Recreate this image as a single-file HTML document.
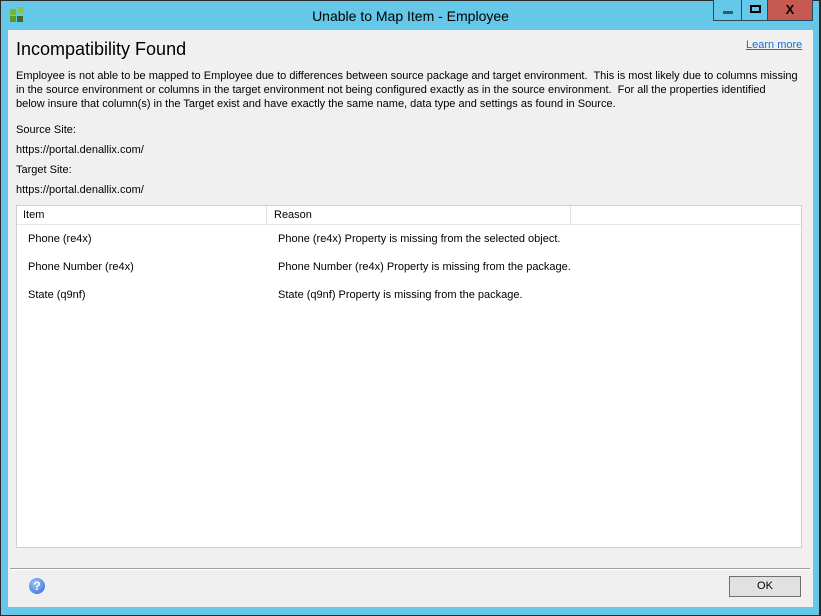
<!DOCTYPE html>
<html><head><meta charset="utf-8"><style>
*{margin:0;padding:0;box-sizing:border-box}
body{width:821px;height:616px;overflow:hidden;background:#2b2b2b;font-family:Tahoma,"Liberation Sans",sans-serif;font-size:11px;color:#000;position:relative}
.win{position:absolute;left:1px;top:1px;width:818px;height:614px;background:#65c8e8}
.client{position:absolute;left:8px;top:30px;width:805px;height:577px;background:#f0f0f0}
.a{position:absolute;white-space:nowrap}
.title{position:absolute;left:0;width:821px;top:8px;text-align:center;font-size:14px;color:#000}
.btn{position:absolute;top:0;height:21px;border:1px solid #2a4a5a;border-top:none}
</style></head><body>
<div class="win"></div>
<div class="a" style="left:10px;top:9px;width:6px;height:6px;background:#76b43a"></div>
<div class="a" style="left:18px;top:7px;width:6px;height:6px;background:#8cc63f"></div>
<div class="a" style="left:10px;top:16px;width:6px;height:6px;background:#5a9a2a"></div>
<div class="a" style="left:17px;top:16px;width:6px;height:6px;background:#3f6e1e"></div>
<div class="title">Unable to Map Item - Employee</div>
<div class="btn" style="left:713px;width:29px;background:#65c8e8"><div class="a" style="left:9px;top:11px;width:10px;height:3px;background:#2f5a6a"></div></div>
<div class="btn" style="left:741px;width:27px;background:#65c8e8"><div class="a" style="left:8px;top:5px;width:11px;height:8px;border:2px solid #000"></div></div>
<div class="btn" style="left:767px;width:46px;background:#c75a50;font-weight:bold;font-size:13px;text-align:center;line-height:20px">X</div>
<div class="client">
<div class="a" style="left:8px;top:9px;font-size:18px">Incompatibility Found</div>
<div class="a" style="left:738px;top:9px;color:#1a6fc9;text-decoration:underline">Learn more</div>
<div class="a" style="left:8px;top:39px;line-height:14px">Employee is not able to be mapped to Employee due to differences between source package and target environment.&nbsp; This is most likely due to columns missing<br>in the source environment or columns in the target environment not being configured exactly as in the source environment.&nbsp; For all the properties identified<br>below insure that column(s) in the Target exist and have exactly the same name, data type and settings as found in Source.</div>
<div class="a" style="left:8px;top:94px">Source Site:</div>
<div class="a" style="left:8px;top:114px">https://portal.denallix.com/</div>
<div class="a" style="left:8px;top:134px">Target Site:</div>
<div class="a" style="left:8px;top:154px">https://portal.denallix.com/</div>
<div class="a" style="left:8px;top:175px;width:786px;height:343px;background:#fff;border:1px solid #d0d0d0">
 <div class="a" style="left:0;top:0;width:784px;height:19px;border-bottom:1px solid #e5e5e5"></div>
 <div class="a" style="left:249px;top:0;width:1px;height:19px;background:#e0e0e0"></div>
 <div class="a" style="left:553px;top:0;width:1px;height:19px;background:#e0e0e0"></div>
 <div class="a" style="left:6px;top:3px">Item</div>
 <div class="a" style="left:257px;top:3px">Reason</div>
 <div class="a" style="left:11px;top:27px">Phone (re4x)</div>
 <div class="a" style="left:261px;top:27px">Phone (re4x) Property is missing from the selected object.</div>
 <div class="a" style="left:11px;top:55px">Phone Number (re4x)</div>
 <div class="a" style="left:261px;top:55px">Phone Number (re4x) Property is missing from the package.</div>
 <div class="a" style="left:11px;top:83px">State (q9nf)</div>
 <div class="a" style="left:261px;top:83px">State (q9nf) Property is missing from the package.</div>
</div>
<div class="a" style="left:2px;top:538px;width:800px;height:1px;background:#a0a0a0"></div>
<div class="a" style="left:2px;top:539px;width:800px;height:1px;background:#fff"></div>
<div class="a" style="left:21px;top:548px;width:16px;height:16px;border-radius:50%;background:radial-gradient(circle at 40% 35%,#9cc8ff,#2a64d8);color:#fff;font-weight:bold;font-size:12px;text-align:center;line-height:16px">?</div>
<div class="a" style="left:721px;top:546px;width:72px;height:21px;border:1px solid #707070;background:#e1e1e1;text-align:center;line-height:19px">OK</div>
</div>
</body></html>
